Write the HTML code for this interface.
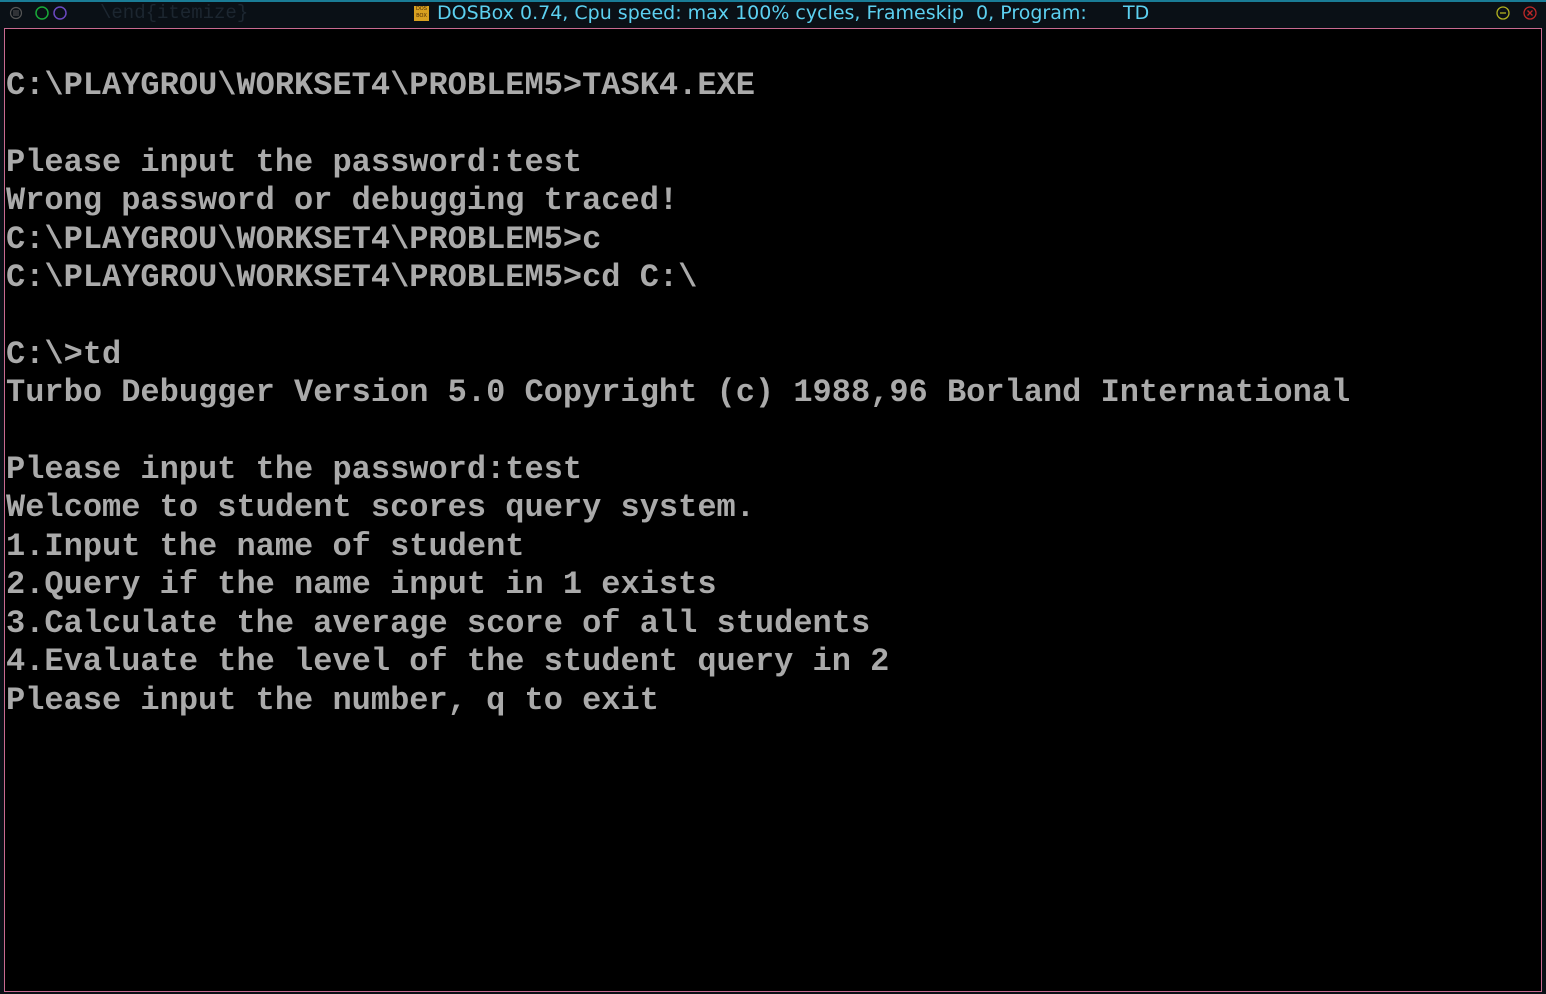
<!DOCTYPE html>
<html><head><style>
body{margin:0;width:1546px;height:994px;background:#0a1016;overflow:hidden;position:relative;font-family:"Liberation Sans",sans-serif}
.top{position:absolute;left:0;top:0;width:1546px;height:2px;background:#1a7c96}
.title{position:absolute;left:437px;top:1px;font-family:"DejaVu Sans",sans-serif;font-size:19px;color:#5cd0f0;white-space:pre;line-height:24px}
.screen{position:absolute;left:4px;top:28px;width:1536px;height:962px;background:#000;border:1px solid #c86a90}
pre{margin:0;position:absolute;left:1px;top:38px;font-family:"Liberation Mono",monospace;font-weight:bold;font-size:32px;line-height:38.4px;color:#aaaaaa;letter-spacing:0}
</style></head><body>
<div class="top"></div>
<svg style="position:absolute;left:8px;top:5px" width="62" height="16"><circle cx="8" cy="8" r="5.5" fill="none" stroke="#555" stroke-width="1.2"/><line x1="5" y1="6" x2="11" y2="6" stroke="#555"/><line x1="5" y1="8" x2="11" y2="8" stroke="#555"/><line x1="5" y1="10" x2="11" y2="10" stroke="#555"/><circle cx="34" cy="8" r="6" fill="none" stroke="#18a838" stroke-width="1.5"/><circle cx="52" cy="8" r="6" fill="none" stroke="#6a48c0" stroke-width="1.5"/></svg>
<div style="position:absolute;left:100px;top:2px;font-family:'Liberation Mono',monospace;font-size:19px;color:#1c2630">\end{itemize}</div>
<div style="position:absolute;left:414px;top:6px;width:15px;height:15px;background:#d8a020;font-size:5px;line-height:7px;text-align:center;color:#402000">DOS<br>BOX</div>
<div class="title">DOSBox 0.74, Cpu speed: max 100% cycles, Frameskip  0, Program:      TD</div>
<svg style="position:absolute;left:1494px;top:5px" width="46" height="16"><circle cx="9" cy="8" r="6" fill="none" stroke="#b0b020" stroke-width="1.3"/><line x1="6" y1="8" x2="12" y2="8" stroke="#b0b020" stroke-width="1.3"/><circle cx="36" cy="8" r="6" fill="none" stroke="#c02828" stroke-width="1.3"/><path d="M33.5 5.5L38.5 10.5M38.5 5.5L33.5 10.5" stroke="#c02828" stroke-width="1.3"/></svg>
<div class="screen"><pre>C:\PLAYGROU\WORKSET4\PROBLEM5>TASK4.EXE

Please input the password:test
Wrong password or debugging traced!
C:\PLAYGROU\WORKSET4\PROBLEM5>c
C:\PLAYGROU\WORKSET4\PROBLEM5>cd C:\

C:\>td
Turbo Debugger Version 5.0 Copyright (c) 1988,96 Borland International

Please input the password:test
Welcome to student scores query system.
1.Input the name of student
2.Query if the name input in 1 exists
3.Calculate the average score of all students
4.Evaluate the level of the student query in 2
Please input the number, q to exit</pre></div>
</body></html>
